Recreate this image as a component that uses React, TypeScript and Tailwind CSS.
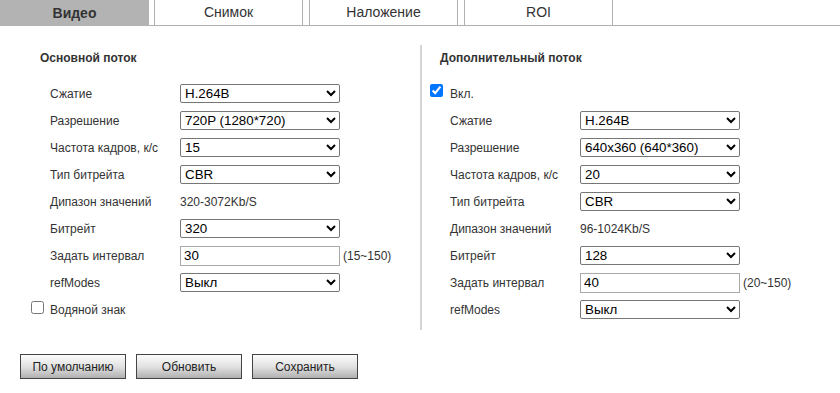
import { useState } from "react";

type Row =
  | { kind: "select"; label: string; value: string; options: string[] }
  | { kind: "text"; label: string; value: string }
  | { kind: "input"; label: string; value: string; hint: string };

const mainRows: Row[] = [
  { kind: "select", label: "Сжатие", value: "H.264B", options: ["H.264B", "H.264", "H.265"] },
  { kind: "select", label: "Разрешение", value: "720P (1280*720)", options: ["720P (1280*720)", "1080P (1920*1080)"] },
  { kind: "select", label: "Частота кадров, к/с", value: "15", options: ["15", "20", "25"] },
  { kind: "select", label: "Тип битрейта", value: "CBR", options: ["CBR", "VBR"] },
  { kind: "text", label: "Дипазон значений", value: "320-3072Kb/S" },
  { kind: "select", label: "Битрейт", value: "320", options: ["320", "512", "1024"] },
  { kind: "input", label: "Задать интервал", value: "30", hint: "(15~150)" },
  { kind: "select", label: "refModes", value: "Выкл", options: ["Выкл", "Вкл"] },
];

const subRows: Row[] = [
  { kind: "select", label: "Сжатие", value: "H.264B", options: ["H.264B", "H.264", "H.265"] },
  { kind: "select", label: "Разрешение", value: "640x360 (640*360)", options: ["640x360 (640*360)", "352x288 (352*288)"] },
  { kind: "select", label: "Частота кадров, к/с", value: "20", options: ["15", "20", "25"] },
  { kind: "select", label: "Тип битрейта", value: "CBR", options: ["CBR", "VBR"] },
  { kind: "text", label: "Дипазон значений", value: "96-1024Kb/S" },
  { kind: "select", label: "Битрейт", value: "128", options: ["128", "256", "512"] },
  { kind: "input", label: "Задать интервал", value: "40", hint: "(20~150)" },
  { kind: "select", label: "refModes", value: "Выкл", options: ["Выкл", "Вкл"] },
];

const tabs = ["Видео", "Снимок", "Наложение", "ROI"];

const FormRow = ({ row }: { row: Row }) => (
  <div className="h-[27px] flex items-center">
    <span className="w-[130px] text-[12px] text-[#333]">{row.label}</span>
    {row.kind === "select" && (
      <select
        defaultValue={row.value}
        className="w-[160px] h-[19px] border border-[#767676] rounded-[2px] bg-white text-black text-[13.33px] pl-0"
      >
        {row.options.map((o) => (
          <option key={o}>{o}</option>
        ))}
      </select>
    )}
    {row.kind === "text" && <span className="text-[12px] text-[#333]">{row.value}</span>}
    {row.kind === "input" && (
      <>
        <input
          defaultValue={row.value}
          className="w-[160px] h-[20px] border border-[#a9a9a9] bg-white text-black text-[13.33px] pl-[3px]"
        />
        <span className="ml-[3px] text-[12px] text-[#333]">{row.hint}</span>
      </>
    )}
  </div>
);

const App = () => {
  const [active, setActive] = useState(0);

  return (
    <div className="w-[840px] h-[393px] bg-white font-['Liberation_Sans',Arial,sans-serif] overflow-hidden">
      <div className="flex h-[26px] border-b border-[#b0b0b0]">
        {tabs.map((t, i) =>
          i === active ? (
            <div
              key={t}
              onClick={() => setActive(i)}
              className="w-[149px] h-[26px] mr-[5px] bg-[#b3b3b3] flex items-center justify-center text-[14px] font-bold text-[#333]"
            >
              {t}
            </div>
          ) : (
            <div
              key={t}
              onClick={() => setActive(i)}
              className="w-[149px] h-[25px] mr-[6px] border-x border-[#b0b0b0] flex items-center justify-center text-[14px] text-[#333]"
            >
              {t}
            </div>
          )
        )}
      </div>

      <div className="flex h-[304px]">
        <div className="w-[420px] pt-[24px]">
          <div className="pl-[40px] text-[12px] leading-[16px] font-bold text-[#333]">Основной поток</div>
          <div className="mt-[14px] pl-[50px]">
            {mainRows.map((r) => (
              <FormRow key={r.label} row={r} />
            ))}
          </div>
          <label className="h-[27px] flex items-center pl-[31px]">
            <input type="checkbox" className="m-0 w-[13px] h-[13px] -mt-[4px]" />
            <span className="ml-[6px] text-[12px] text-[#333]">Водяной знак</span>
          </label>
        </div>

        <div className="w-[2px] mt-[19px] h-[285px] bg-[#d4d4d4]" />

        <div className="flex-1 pt-[24px]">
          <div className="pl-[18px] text-[12px] leading-[16px] font-bold text-[#333]">Дополнительный поток</div>
          <label className="mt-[14px] h-[27px] flex items-center pl-[8px]">
            <input type="checkbox" defaultChecked className="m-0 w-[13px] h-[13px] -mt-[7px]" />
            <span className="ml-[7px] text-[12px] text-[#333]">Вкл.</span>
          </label>
          <div className="pl-[28px]">
            {subRows.map((r) => (
              <FormRow key={r.label} row={r} />
            ))}
          </div>
        </div>
      </div>

      <div className="flex gap-[10px] pl-[20px] mt-[24px]">
        {["По умолчанию", "Обновить", "Сохранить"].map((b) => (
          <button
            key={b}
            className="w-[106px] h-[25px] border border-[#444] bg-linear-to-b from-[#fbfbfb] via-[#e2e2e2] to-[#b1b1b1] text-[12px] text-[#222]"
          >
            {b}
          </button>
        ))}
      </div>
    </div>
  );
};

export default App;
